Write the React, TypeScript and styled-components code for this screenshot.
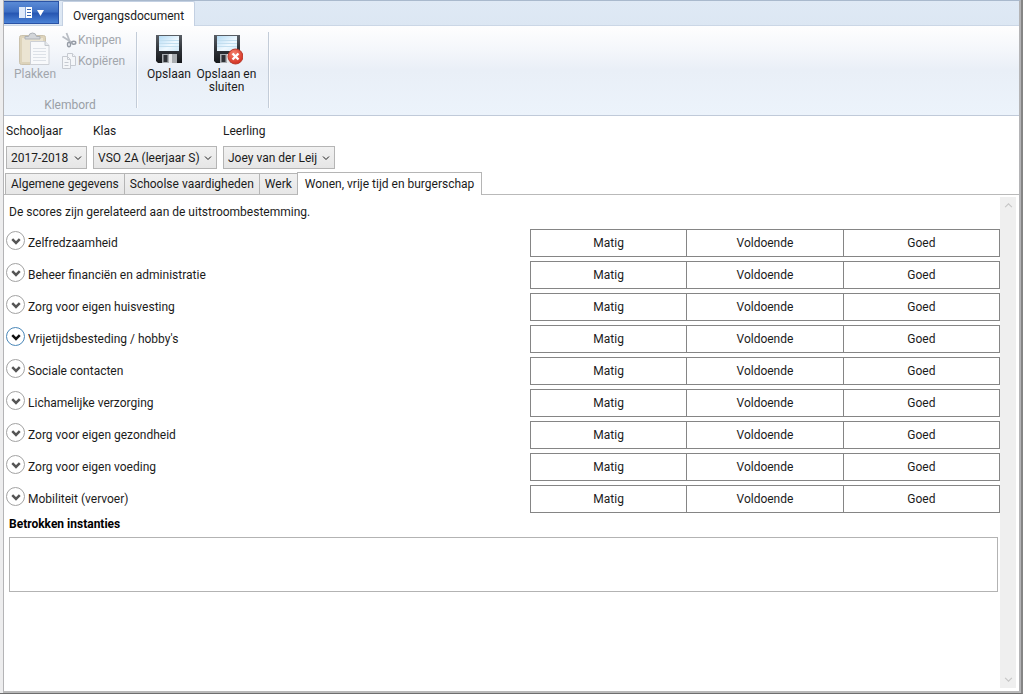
import React, { useState } from "react";
import styled, { createGlobalStyle } from "styled-components";

const GlobalStyle = createGlobalStyle`
  * { box-sizing: border-box; }
  body { margin: 0; background: #fff; }
  body, button, select, textarea {
    font-family: Roboto, "Open Sans", sans-serif;
    font-size: 12px;
    line-height: 16px;
    color: #1b1b1b;
  }
  button { margin: 0; padding: 0; border: 0; background: none; }
`;

const Frame = styled.div`
  display: flex;
  min-height: 100vh;
  background: #ededee;
  padding-left: 3px;
  border-right: 2px solid #858585;
  border-bottom: 1px solid #6e6e6e;
`;

const Window = styled.div`
  flex: 1;
  min-width: 0;
  display: flex;
  flex-direction: column;
  background: #fff;
  border: 1px solid #b4b4b6;
  border-top-color: #a9b9cd;
  border-right-width: 2px;
  border-bottom: 2px solid #b9b9b9;
`;

const TabStrip = styled.header`
  display: flex;
  align-items: stretch;
  height: 25px;
  background: linear-gradient(#dfe9f5, #dce7f3);
  box-shadow: inset 0 -1px #cbd7e6;
`;

const AppMenuButton = styled.button`
  width: 55px;
  height: 23px;
  display: flex;
  align-items: center;
  justify-content: center;
  gap: 5px;
  border: 1px solid #2a53a5;
  border-left: 0;
  background: linear-gradient(#5b8bd6 0%, #3f70c4 45%, #2757b3 55%, #4b83d6 100%);
`;

const RibbonTab = styled.button`
  margin-left: 3px;
  padding: 4px 10px 0;
  border: 1px solid #c3d0e2;
  border-bottom: 0;
  border-radius: 2px 2px 0 0;
  background: #fff;
`;

const Ribbon = styled.section`
  display: flex;
  height: 90px;
  padding: 6px 0 7px;
  border-bottom: 1px solid #c0cad9;
  background: linear-gradient(#fefefe 0%, #f5f7fb 25%, #e9eff7 50%, #ecf3fb 100%);
`;

const RibbonGroup = styled.div<{ $pad?: number }>`
  display: flex;
  flex-direction: column;
  justify-content: space-between;
  padding: 0 ${(p) => p.$pad ?? 8}px;
  border-right: 1px solid #c3ccd8;
  box-shadow: 1px 0 #fbfcfe;
`;

const GroupTools = styled.div`
  display: flex;
  align-items: flex-start;
`;

const GroupLabel = styled.div`
  text-align: center;
  color: #9a9fa6;
  height: 11px;
`;

const SmallTools = styled.div`
  width: 70px;
  display: flex;
  flex-direction: column;
  gap: 5px;
`;

const LargeButton = styled.button<{ $width: number }>`
  width: ${(p) => p.$width}px;
  display: flex;
  flex-direction: column;
  align-items: center;
  gap: 2px;
  line-height: 13px;
  color: #1b1b1b;
  &:disabled { color: #a2a6ac; }
`;

const SmallButton = styled.button`
  display: flex;
  align-items: center;
  gap: 1px;
  &:disabled { color: #a2a6ac; }
`;

const Filters = styled.form`
  display: flex;
  gap: 6px;
  padding: 7px 2px 3px;
`;

const Field = styled.div`
  display: flex;
  flex-direction: column;
  gap: 7px;
`;

const SelectBox = styled.div<{ $width: number }>`
  display: grid;
  width: ${(p) => p.$width}px;
  align-items: center;
  > * { grid-area: 1 / 1; }
  > svg { justify-self: end; margin-right: 5px; pointer-events: none; }
`;

const Select = styled.select`
  appearance: none;
  width: 100%;
  height: 23px;
  padding: 0 16px 0 4px;
  border: 1px solid #b5b5b5;
  border-radius: 0;
  background: linear-gradient(#f1f1f1, #e6e6e6);
`;

const Tabs = styled.div`
  display: flex;
  align-items: flex-end;
  padding-left: 1px;
`;

const Tab = styled.button<{ $active: boolean }>`
  height: ${(p) => (p.$active ? 23 : 21)}px;
  padding: ${(p) => (p.$active ? "0 7px 1px" : "0 5px")};
  margin-right: ${(p) => (p.$active ? 0 : -1)}px;
  margin-bottom: ${(p) => (p.$active ? -1 : 0)}px;
  position: relative;
  border: 1px solid #b5b5b5;
  border-bottom: 0;
  background: ${(p) => (p.$active ? "#fff" : "linear-gradient(#f1f1f1, #e7e7e7)")};
  white-space: nowrap;
`;

const Panel = styled.main`
  flex: 1;
  display: flex;
  border-top: 1px solid #b9b9b9;
  padding: 2px 3px 3px 0;
`;

const PanelBody = styled.div`
  flex: 1;
  min-width: 0;
`;

const Intro = styled.p`
  margin: 0;
  padding: 7px 5px 9px;
`;

const Rows = styled.ul`
  list-style: none;
  margin: 0;
  padding: 0;
  display: flex;
  flex-direction: column;
  gap: 4px;
`;

const Row = styled.li`
  display: flex;
  height: 28px;
`;

const RowHead = styled.div`
  flex: 526;
  min-width: 0;
  display: flex;
  align-items: center;
  gap: 3px;
  padding-left: 2px;
`;

const Expander = styled.button<{ $hot: boolean }>`
  width: 19px;
  height: 19px;
  margin-bottom: 5px;
  display: grid;
  place-items: center;
  border: 1px solid ${(p) => (p.$hot ? "#4a87b8" : "#a3a3a3")};
  border-radius: 50%;
  background: #fff;
  color: ${(p) => (p.$hot ? "#111" : "#555")};
`;

const Scores = styled.div`
  flex: 470;
  display: flex;
  border: 1px solid #858585;
`;

const Score = styled.button`
  flex: 1;
  & + & { border-left: 1px solid #858585; }
`;

const NotesLabel = styled.label`
  display: block;
  padding: 3px 5px 5px;
  font-weight: 700;
  color: #000;
`;

const NotesBox = styled.div`
  display: flex;
  padding: 0 2px 0 5px;
`;

const Notes = styled.textarea`
  flex: 1;
  height: 55px;
  border: 1px solid #b3b3b3;
  border-radius: 0;
  resize: none;
`;

const ScrollTrack = styled.div`
  width: 16px;
  display: flex;
  flex-direction: column;
  justify-content: space-between;
  background: #efefef;
`;

const ScrollButton = styled.button`
  height: 17px;
  display: grid;
  place-items: center;
  color: #c6c6c6;
`;

const Chevron = ({ size = 8, weight = 1, up = false }: { size?: number; weight?: number; up?: boolean }) => (
  <svg width={size} height={size} viewBox="0 0 8 8" fill="none" stroke="currentColor" strokeWidth={weight} aria-hidden="true">
    <path d={up ? "M1 5.5 4 2.5 7 5.5" : "M1 2.5 4 5.5 7 2.5"} />
  </svg>
);

const AppMenuIcon = () => (
  <svg width="13" height="11" viewBox="0 0 13 11" aria-hidden="true">
    <path d="M0 0h6v11H0z" fill="#dfeafa" />
    <path d="M6 0h7v11H6z" fill="#fff" />
    <path d="M6.500 0v11" stroke="#7d9fd6" />
    <path d="M8 2.500h4M8 5.500h4M8 8.500h4" stroke="#3c67b0" />
  </svg>
);

const PasteIcon = () => (
  <svg width="32" height="34" viewBox="0 0 32 34" aria-hidden="true">
    <rect x=".5" y="3.500" width="26" height="29" rx="2" fill="#ddd3ba" stroke="#cbc2ad" />
    <path d="M3 6h21v24H3z" fill="#ebe4d2" />
    <path d="M6 7V4.500h3.500Q10 1 13.500 1t4 3.500H21V7z" fill="#d3d6da" stroke="#adb1b7" />
    <path d="M11.500 9.500H26l4 4v19H11.500z" fill="#f8f9fb" stroke="#cdd0d6" />
    <path d="M26 9.500v4h4" fill="#e5e8ec" stroke="#c3c7cd" />
    <path d="M14 16.500h13M14 19.500h13M14 22.500h13M14 25.500h13M14 28.500h13" stroke="#dde1e7" />
  </svg>
);

const CutIcon = () => (
  <svg width="16" height="16" viewBox="0 0 16 16" fill="none" aria-hidden="true">
    <path d="M5.500 1 9 10M1.500 4.500 11 10.500" stroke="#b9bdc4" strokeWidth="1.800" />
    <ellipse cx="8" cy="12.500" rx="1.500" ry="2.200" stroke="#959ba5" strokeWidth="1.400" />
    <ellipse cx="12.800" cy="10.800" rx="2" ry="1.500" stroke="#959ba5" strokeWidth="1.400" />
  </svg>
);

const CopyIcon = () => (
  <svg width="16" height="16" viewBox="0 0 16 16" fill="#f4f6f9" stroke="#c6cad1" aria-hidden="true">
    <path d="M6.500.5h5l3 3v9h-8z" />
    <path d="M11.500.5v3h3" />
    <path d="M1.500 3.500h5l3 3v9h-8z" />
    <path d="M6.500 3.500v3h3M3.500 9.500h4M3.500 12.500h4" fill="none" />
  </svg>
);

const SaveIcon = ({ closing = false }: { closing?: boolean }) => (
  <svg width="32" height="34" viewBox="0 0 32 34" aria-hidden="true">
    <defs>
      <linearGradient id="disk" x1="0" y1="0" x2="0" y2="1">
        <stop offset="0" stopColor="#5a5f66" />
        <stop offset=".5" stopColor="#30343a" />
        <stop offset="1" stopColor="#17191c" />
      </linearGradient>
      <linearGradient id="paper" x1="0" y1="0" x2="1" y2="1">
        <stop offset="0" stopColor="#b4dbf5" />
        <stop offset=".6" stopColor="#f0f9ff" />
        <stop offset="1" stopColor="#d2ebfa" />
      </linearGradient>
      <radialGradient id="stop" cx=".4" cy=".3" r=".8">
        <stop offset="0" stopColor="#f5836d" />
        <stop offset="1" stopColor="#ce2417" />
      </radialGradient>
    </defs>
    <path d="M3 3h26v28H5l-2-2z" fill="url(#disk)" />
    <path d="M6 4h20v15H6z" fill="url(#paper)" />
    <path d="M6 8.500h20M6 11.500h20M6 14.500h20" stroke="#c3dff0" />
    <path d="M9 22h15v9H9z" fill="#a9adb1" />
    <path d="M10.500 23h4v7h-4z" fill="#2e3136" />
    <path d="M16 22h3v9h-3z" fill="#e6e8ea" />
    {closing && (
      <>
        <circle cx="24.500" cy="24.500" r="7.500" fill="url(#stop)" stroke="#b93a2b" />
        <path d="m21.500 21.500 6 6m0-6-6 6" stroke="#fff" strokeWidth="2.400" />
      </>
    )}
  </svg>
);

const filters = [
  { id: "schooljaar", label: "Schooljaar", value: "2017-2018", width: 81 },
  { id: "klas", label: "Klas", value: "VSO 2A (leerjaar S)", width: 124 },
  { id: "leerling", label: "Leerling", value: "Joey van der Leij", width: 112 },
];

const tabs = ["Algemene gegevens", "Schoolse vaardigheden", "Werk", "Wonen, vrije tijd en burgerschap"];

const subjects = [
  "Zelfredzaamheid",
  "Beheer financiën en administratie",
  "Zorg voor eigen huisvesting",
  "Vrijetijdsbesteding / hobby's",
  "Sociale contacten",
  "Lichamelijke verzorging",
  "Zorg voor eigen gezondheid",
  "Zorg voor eigen voeding",
  "Mobiliteit (vervoer)",
];

const levels = ["Matig", "Voldoende", "Goed"];

export default function App() {
  const [tab, setTab] = useState(3);
  return (
    <Frame>
      <GlobalStyle />
      <Window>
        <TabStrip>
          <AppMenuButton aria-label="Menu">
            <AppMenuIcon />
            <svg width="7" height="6" viewBox="0 0 7 6" aria-hidden="true">
              <path d="M0 0h7L3.500 6z" fill="#fff" />
            </svg>
          </AppMenuButton>
          <RibbonTab>Overgangsdocument</RibbonTab>
        </TabStrip>
        <Ribbon>
          <RibbonGroup $pad={5}>
            <GroupTools>
              <LargeButton $width={52} disabled>
                <PasteIcon />
                Plakken
              </LargeButton>
              <SmallTools>
                <SmallButton disabled><CutIcon />Knippen</SmallButton>
                <SmallButton disabled><CopyIcon />Kopiëren</SmallButton>
              </SmallTools>
            </GroupTools>
            <GroupLabel>Klembord</GroupLabel>
          </RibbonGroup>
          <RibbonGroup>
            <GroupTools>
              <LargeButton $width={48}><SaveIcon />Opslaan</LargeButton>
              <LargeButton $width={67}><SaveIcon closing />Opslaan en sluiten</LargeButton>
            </GroupTools>
          </RibbonGroup>
        </Ribbon>
        <Filters>
          {filters.map((f) => (
            <Field key={f.id}>
              <label htmlFor={f.id}>{f.label}</label>
              <SelectBox $width={f.width}>
                <Select id={f.id}>
                  <option>{f.value}</option>
                </Select>
                <Chevron />
              </SelectBox>
            </Field>
          ))}
        </Filters>
        <Tabs role="tablist">
          {tabs.map((t, i) => (
            <Tab key={t} role="tab" aria-selected={i === tab} $active={i === tab} onClick={() => setTab(i)}>
              {t}
            </Tab>
          ))}
        </Tabs>
        <Panel>
          <PanelBody>
            <Intro>De scores zijn gerelateerd aan de uitstroombestemming.</Intro>
            <Rows>
              {subjects.map((s, i) => (
                <Row key={s}>
                  <RowHead>
                    <Expander $hot={i === 3} aria-label={s} aria-expanded={false}>
                      <Chevron size={10} weight={2} />
                    </Expander>
                    <span>{s}</span>
                  </RowHead>
                  <Scores role="group" aria-label={s}>
                    {levels.map((l) => (
                      <Score key={l}>{l}</Score>
                    ))}
                  </Scores>
                </Row>
              ))}
            </Rows>
            <NotesLabel htmlFor="instanties">Betrokken instanties</NotesLabel>
            <NotesBox>
              <Notes id="instanties" />
            </NotesBox>
          </PanelBody>
          <ScrollTrack>
            <ScrollButton aria-label="Omhoog"><Chevron size={9} up /></ScrollButton>
            <ScrollButton aria-label="Omlaag"><Chevron size={9} /></ScrollButton>
          </ScrollTrack>
        </Panel>
      </Window>
    </Frame>
  );
}
